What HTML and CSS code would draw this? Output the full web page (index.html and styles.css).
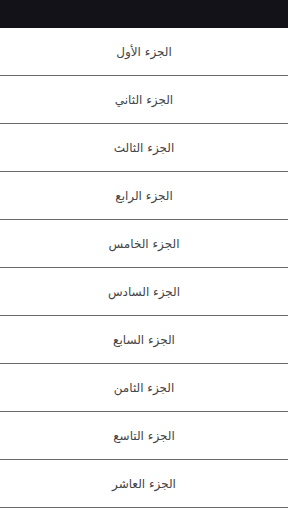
FILE: index.html
```html
<!DOCTYPE html>
<html lang="ar" dir="rtl">
<head>
  <meta charset="UTF-8" />
  <meta name="viewport" content="width=device-width, initial-scale=1.0" />
  <title>الأجزاء</title>
  <link rel="stylesheet" href="styles.css">
</head>
<body>
  <div class="topbar"></div>
  <ul class="parts">
    <li>الجزء الأول</li>
    <li>الجزء الثاني</li>
    <li>الجزء الثالث</li>
    <li>الجزء الرابع</li>
    <li>الجزء الخامس</li>
    <li>الجزء السادس</li>
    <li>الجزء السابع</li>
    <li>الجزء الثامن</li>
    <li>الجزء التاسع</li>
    <li>الجزء العاشر</li>
  </ul>
</body>
</html>
```

FILE: styles.css
```css
body { margin: 0; background: #fff; font-family: "DejaVu Sans", "Noto Sans", sans-serif; }
.topbar { height: 28px; background: #121218; }
.parts { list-style: none; margin: 0; padding: 0; }
.parts li { height: 47px; border-bottom: 1px solid #6a6a6a; display: flex; align-items: center; justify-content: center; font-size: 12px; color: #444; }
```
